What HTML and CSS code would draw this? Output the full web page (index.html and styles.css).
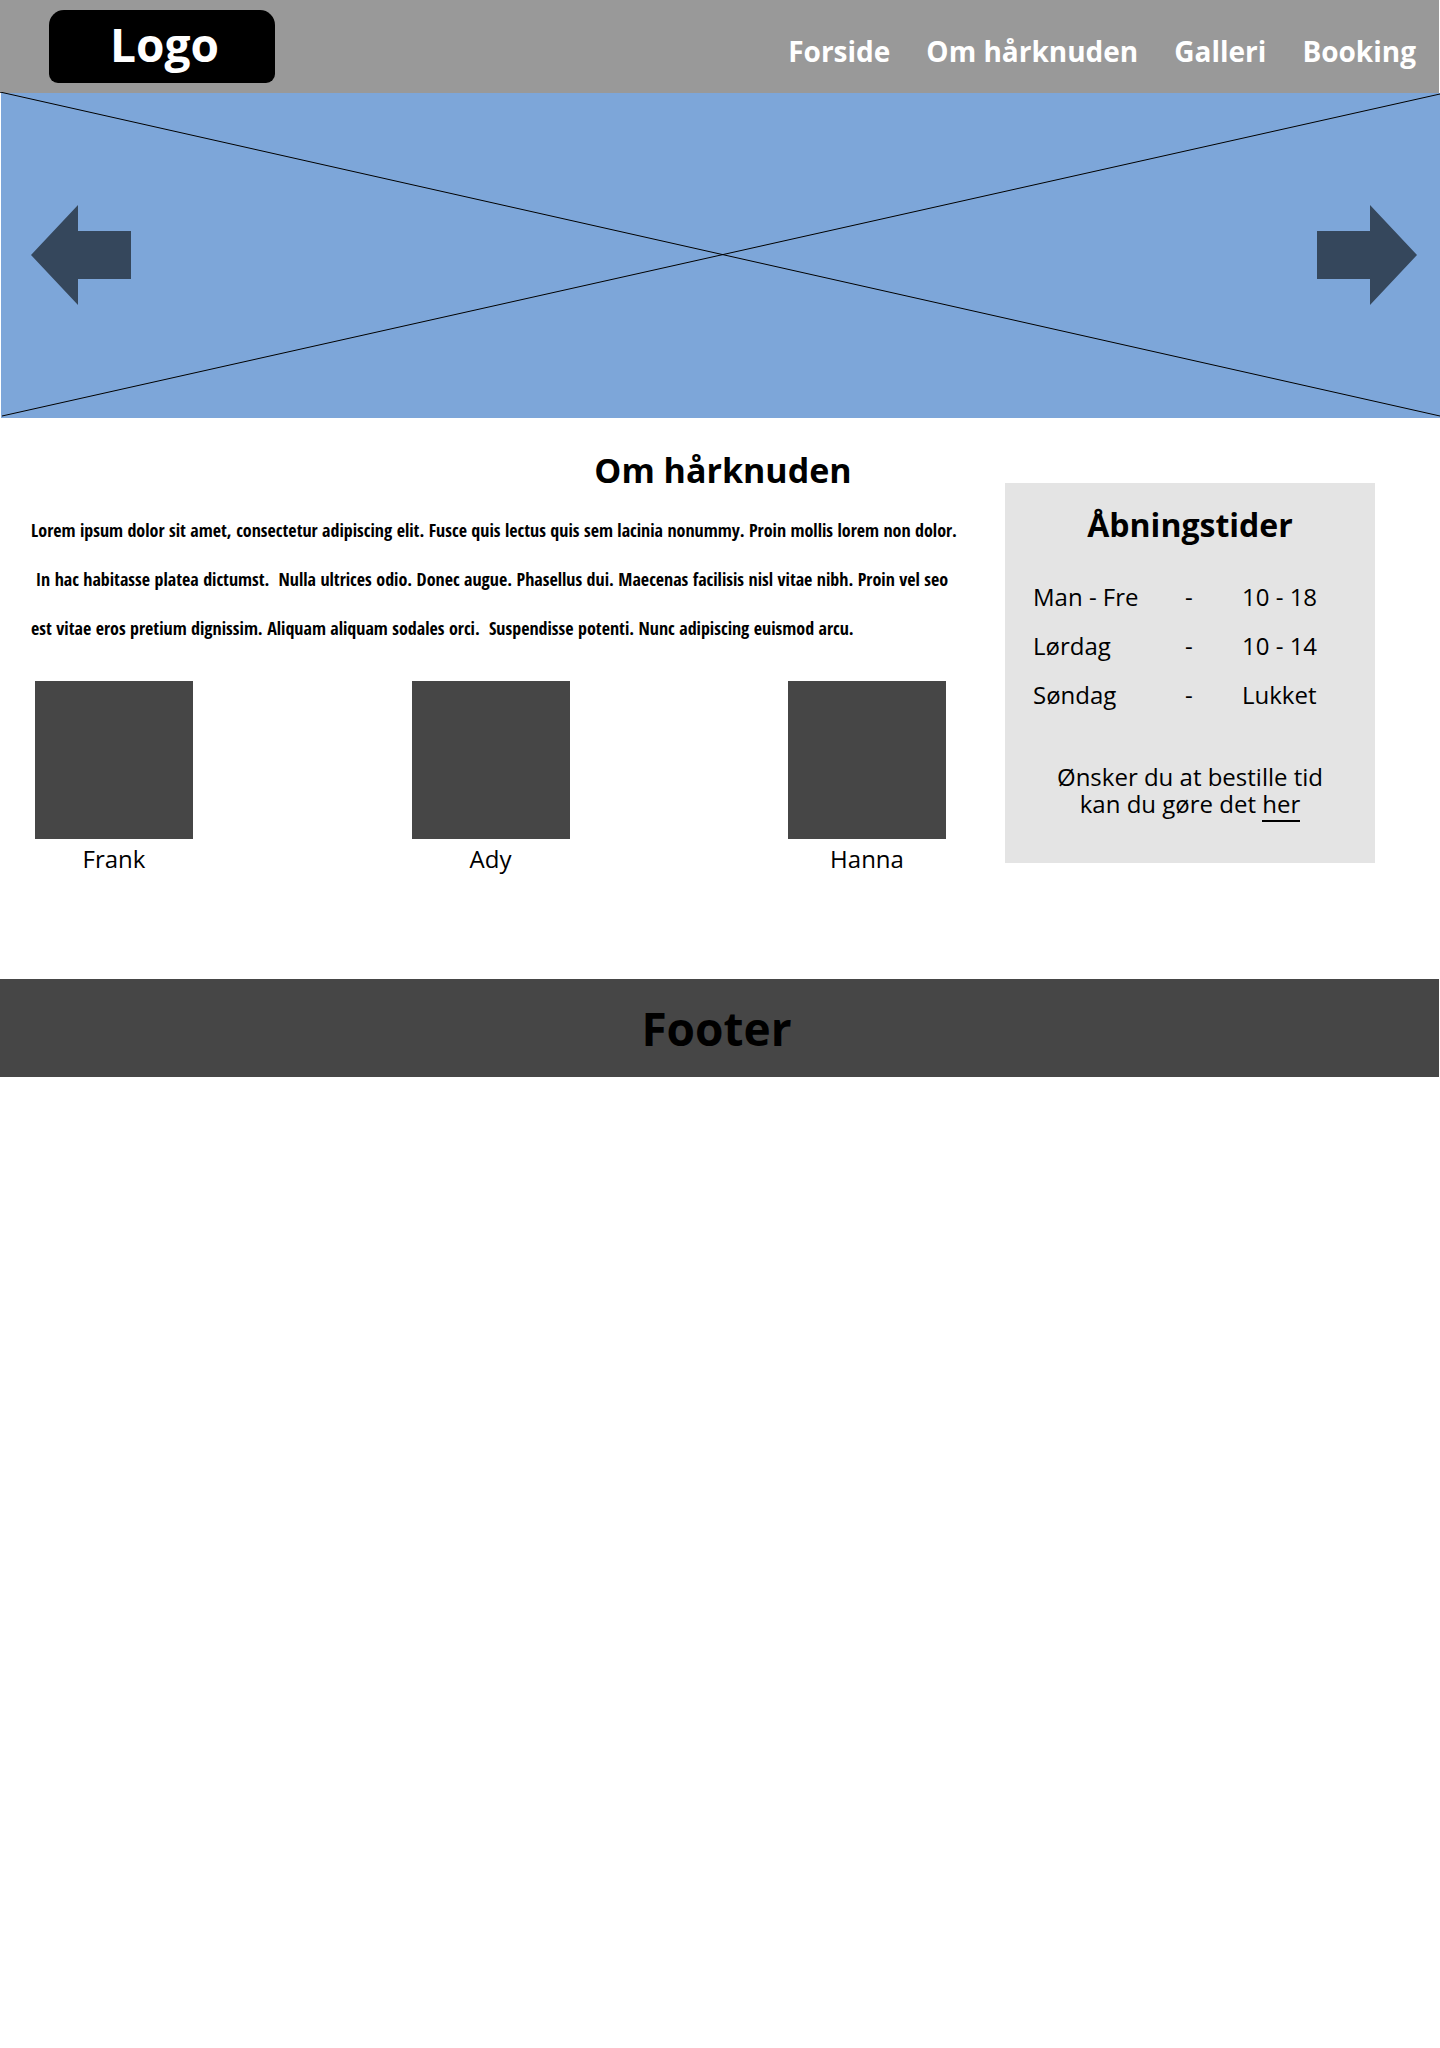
FILE: index.html
```html
<!DOCTYPE html>
<html lang="da">
<head>
<meta charset="utf-8">
<meta name="viewport" content="width=device-width, initial-scale=1">
<title>Om hårknuden</title>
<link rel="stylesheet" href="styles.css">
</head>
<body>
<header class="header">
  <a class="logo" href="#">Logo</a>
  <nav class="nav">
    <a href="#">Forside</a>
    <a href="#">Om hårknuden</a>
    <a href="#">Galleri</a>
    <a href="#">Booking</a>
  </nav>
</header>

<section class="hero" aria-label="Billeder">
  <svg class="hero-cross" viewBox="0 0 1440 326" preserveAspectRatio="none" aria-hidden="true">
    <path d="M0 0L1440 324M2 324L1440 2"/>
  </svg>
  <button class="arrow" type="button" aria-label="Forrige">
    <svg viewBox="0 0 100 100" aria-hidden="true"><path d="M0 50L47 0V26H100V74H47V100Z"/></svg>
  </button>
  <button class="arrow" type="button" aria-label="Næste">
    <svg viewBox="0 0 100 100" aria-hidden="true"><path d="M100 50L53 0V26H0V74H53V100Z"/></svg>
  </button>
</section>

<main class="main">
  <h1 class="title">Om hårknuden</h1>
  <div class="about">
    <p class="intro">
      <span class="line">Lorem ipsum dolor sit amet, consectetur adipiscing elit. Fusce quis lectus quis sem lacinia nonummy. Proin mollis lorem non dolor.</span>
      <span class="line">&nbsp;In hac habitasse platea dictumst.&nbsp; Nulla ultrices odio. Donec augue. Phasellus dui. Maecenas facilisis nisl vitae nibh. Proin vel seo</span>
      <span class="line">est vitae eros pretium dignissim. Aliquam aliquam sodales orci.&nbsp; Suspendisse potenti. Nunc adipiscing euismod arcu.</span>
    </p>
    <div class="team">
      <figure class="member"><div class="photo"></div><figcaption>Frank</figcaption></figure>
      <figure class="member"><div class="photo"></div><figcaption>Ady</figcaption></figure>
      <figure class="member"><div class="photo"></div><figcaption>Hanna</figcaption></figure>
    </div>
  </div>
  <aside class="hours">
    <h2 class="hours-title">Åbningstider</h2>
    <table class="hours-table">
      <tbody>
        <tr><th scope="row">Man - Fre</th><td class="dash">-</td><td>10 - 18</td></tr>
        <tr><th scope="row">Lørdag</th><td class="dash">-</td><td>10 - 14</td></tr>
        <tr><th scope="row">Søndag</th><td class="dash">-</td><td>Lukket</td></tr>
      </tbody>
    </table>
    <p class="booking">Ønsker du at bestille tid<br>kan du gøre det <a href="#">her</a></p>
  </aside>
</main>

<footer class="footer">Footer</footer>
</body>
</html>
```

FILE: styles.css
```css
* {
  box-sizing: border-box;
}

body {
  margin: 0;
  background: #fff;
  color: #000;
  font-family: "Open Sans", "Noto Sans", sans-serif;
  font-size: 24px;
}

.header {
  display: flex;
  justify-content: space-between;
  margin-right: 1px;
  padding: 10px 23px 10px 49px;
  background: #999;
}

.logo {
  width: 226px;
  height: 73px;
  padding-left: 5px;
  border-radius: 15px 15px 9px 9px;
  background: #000;
  color: #fff;
  font-size: 46px;
  font-weight: 700;
  line-height: 68px;
  text-align: center;
  text-decoration: none;
}

.nav {
  display: flex;
  align-items: flex-end;
  gap: 36px;
  padding-bottom: 12px;
}

.nav a {
  color: #fff;
  font-size: 28px;
  font-weight: 700;
  line-height: 40px;
  text-decoration: none;
}

.hero {
  position: relative;
  display: flex;
  align-items: center;
  justify-content: space-between;
  height: 325px;
  margin-left: 1px;
  padding: 0 23px 2px 30px;
  background: #7da6d9;
}

/* diagonals of the picture placeholder, behind the arrows */
.hero-cross {
  position: absolute;
  left: -1px;
  bottom: 0;
  width: calc(100% + 1px);
  height: calc(100% + 1px);
  fill: none;
  stroke: #000;
}

.arrow {
  position: relative;
  width: 100px;
  height: 100px;
  padding: 0;
  border: 0;
  background: none;
  cursor: pointer;
}

.arrow svg {
  display: block;
  fill: #35475c;
}

.main {
  display: grid;
  grid-template-columns: minmax(0, 1fr) 370px;
  column-gap: 59px;
  padding: 32px 65px 104px 31px;
}

.title {
  grid-area: 1 / 1 / 2 / 3;
  margin: 0;
  padding-left: 40px;
  font-size: 34px;
  line-height: 40px;
  text-align: center;
}

.about {
  grid-area: 2 / 1;
}

.intro {
  margin: 16px 0 28px;
  font-family: "Open Sans Condensed", "Open Sans", sans-serif;
  font-size: 18px;
  font-weight: 700;
  line-height: 49px;
}

.line {
  display: block;
  white-space: nowrap;
}

.team {
  display: flex;
  justify-content: space-between;
  padding-left: 4px;
}

.member {
  margin: 0;
  text-align: center;
}

.photo {
  width: 158px;
  height: 158px;
  margin-bottom: 4px;
  background: #464646;
}

.member figcaption {
  line-height: 32px;
}

.hours {
  grid-area: 1 / 2 / 3 / 3;
  align-self: start;
  margin-top: 33px;
  padding: 20px 28px 46px;
  background: #e4e4e4;
}

.hours-title {
  margin: 0 0 25px;
  font-size: 32px;
  line-height: 44px;
  text-align: center;
}

.hours-table {
  width: 100%;
  margin-bottom: 44px;
  border-collapse: collapse;
  table-layout: fixed;
  line-height: 49px;
}

.hours-table th,
.hours-table td {
  padding: 0;
  font-weight: 400;
  text-align: left;
}

.hours-table th {
  width: 152px;
}

.hours-table .dash {
  width: 57px;
}

.booking {
  margin: 0;
  line-height: 27px;
  text-align: center;
}

.booking a {
  border-bottom: 2px solid #000;
  color: inherit;
  text-decoration: none;
}

.footer {
  margin-right: 1px;
  padding-right: 6px;
  background: #464646;
  font-size: 46px;
  font-weight: 700;
  line-height: 98px;
  text-align: center;
}
```
